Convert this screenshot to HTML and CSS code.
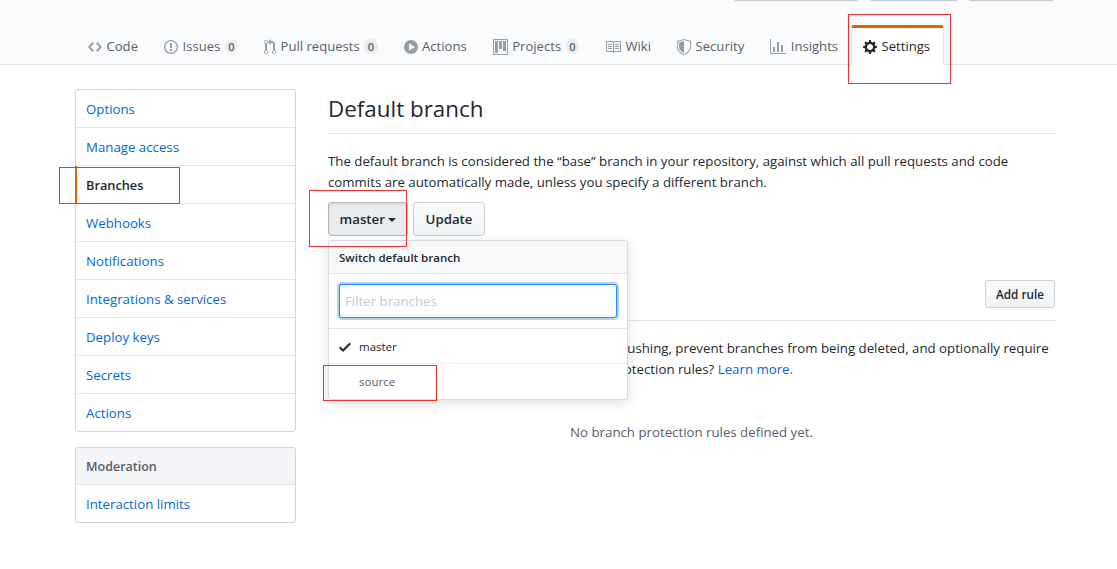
FILE: index.html
```html
<!DOCTYPE html>
<html lang="en">
<head>
  <meta charset="UTF-8" />
  <title>Branches</title>
  <link rel="stylesheet" href="styles.css">
</head>
<body>
  <header class="repo-head">
    <div class="stubs">
      <span class="stub stub-a"></span>
      <span class="stub stub-b"></span>
      <span class="stub stub-c"></span>
    </div>
    <nav class="tabs">
      <a class="tab">
        <svg class="icon" width="14" height="16" viewBox="0 0 14 16"><path fill="#959da5" d="M9.5 3L8 4.5 11.5 8 8 11.5 9.5 13 14 8 9.5 3zm-5 0L0 8l4.5 5L6 11.500 2.500 8 6 4.500 4.500 3z"/></svg>
        Code
      </a>
      <a class="tab">
        <svg class="icon" width="14" height="16" viewBox="0 0 14 16"><path fill="#959da5" fill-rule="evenodd" d="M7 2.300c3.140 0 5.700 2.560 5.700 5.700s-2.560 5.700-5.700 5.700A5.710 5.710 0 0 1 1.300 8c0-3.140 2.560-5.700 5.700-5.700zM7 1C3.140 1 0 4.140 0 8s3.140 7 7 7 7-3.140 7-7-3.140-7-7-7zm1 3H6v5h2V4zm0 6H6v2h2v-2z"/></svg>
        Issues <span class="count">0</span>
      </a>
      <a class="tab">
        <svg class="icon" width="12" height="16" viewBox="0 0 12 16"><path fill="#959da5" fill-rule="evenodd" d="M11 11.280V5c-.030-.780-.340-1.470-.940-2.060C9.460 2.350 8.780 2.030 8 2H7V0L4 3l3 3V4h1c.270.020.480.110.690.310.210.200.300.420.310.690v6.280A1.993 1.993 0 0 0 10 15a1.993 1.993 0 0 0 1-3.720zm-1 2.920c-.660 0-1.200-.550-1.200-1.200 0-.650.550-1.200 1.200-1.200.650 0 1.200.550 1.200 1.200 0 .650-.550 1.200-1.200 1.200zM4 3c0-1.110-.890-2-2-2a1.993 1.993 0 0 0-1 3.720v6.560A1.993 1.993 0 0 0 2 15a1.993 1.993 0 0 0 1-3.720V4.720c.590-.340 1-.980 1-1.720zm-.800 10c0 .660-.550 1.200-1.200 1.200-.650 0-1.200-.550-1.200-1.200 0-.650.550-1.200 1.200-1.200.650 0 1.200.550 1.200 1.200zM2 4.200C1.340 4.200.800 3.650.800 3c0-.650.550-1.200 1.200-1.200.650 0 1.200.550 1.200 1.200 0 .650-.550 1.200-1.200 1.200z"/></svg>
        Pull requests <span class="count">0</span>
      </a>
      <a class="tab">
        <svg class="icon" width="14" height="16" viewBox="0 0 14 16"><path fill="#959da5" fill-rule="evenodd" d="M7 1a7 7 0 1 0 0 14A7 7 0 0 0 7 1zM5 11.500v-7L11 8l-6 3.500z"/></svg>
        Actions
      </a>
      <a class="tab">
        <svg class="icon" width="15" height="16" viewBox="0 0 15 16"><path fill="#959da5" fill-rule="evenodd" d="M10 12h3V2h-3v10zm-4-2h3V2H6v8zm-4 4h3V2H2v12zm-1 1h13V1H1v14zM14 0H1a1 1 0 0 0-1 1v14a1 1 0 0 0 1 1h13a1 1 0 0 0 1-1V1a1 1 0 0 0-1-1z"/></svg>
        Projects <span class="count">0</span>
      </a>
      <a class="tab">
        <svg class="icon" width="16" height="16" viewBox="0 0 16 16"><path fill="#959da5" fill-rule="evenodd" d="M3 5h4v1H3V5zm0 3h4V7H3v1zm0 2h4V9H3v1zm11-5h-4v1h4V5zm0 2h-4v1h4V7zm0 2h-4v1h4V9zm2-6v9c0 .550-.450 1-1 1H9.500l-1 1-1-1H2c-.550 0-1-.450-1-1V3c0-.550.450-1 1-1h5.500l1 1 1-1H15c.550 0 1 .450 1 1zM8 3.500L7.500 3H2v9h6V3.500zM15 3H9.500L9 3.500V12h6V3z"/></svg>
        Wiki
      </a>
      <a class="tab">
        <svg class="icon" width="14" height="16" viewBox="0 0 14 16"><path fill="#959da5" fill-rule="evenodd" d="M0 2l7-2 7 2v6.020C14 12.690 8.690 16 7 16c-1.690 0-7-3.310-7-7.980V2zm7-1L1 2.750V8c0 4.100 4.800 6.800 6 7 1.200-.200 6-2.900 6-7V2.750L7 1z"/><path fill="#959da5" d="M2 3.500L7 2v12c-1-.300-5-2.800-5-6V3.500z"/></svg>
        Security
      </a>
      <a class="tab">
        <svg class="icon" width="16" height="16" viewBox="0 0 16 16"><path fill="#959da5" fill-rule="evenodd" d="M16 14v1H0V0h1v14h15zM5 13H3V8h2v5zm4 0H7V3h2v10zm4 0h-2V6h2v7z"/></svg>
        Insights
      </a>
      <a class="tab tab-selected">
        <svg class="icon" width="14" height="16" viewBox="0 0 14 16"><path fill="#24292e" fill-rule="evenodd" d="M14 8.770v-1.600l-1.940-.640-.450-1.090.880-1.840-1.130-1.130-1.810.910-1.090-.450-.690-1.920h-1.600l-.630 1.940-1.110.450-1.840-.880-1.130 1.130.910 1.810-.450 1.090L0 7.230v1.590l1.940.640.450 1.090-.880 1.840 1.130 1.130 1.810-.910 1.090.450.690 1.920h1.590l.630-1.940 1.110-.450 1.840.880 1.130-1.130-.920-1.810.470-1.090L14 8.750v.020zM7 11c-1.660 0-3-1.340-3-3s1.340-3 3-3 3 1.340 3 3-1.340 3-3 3z"/></svg>
        Settings
      </a>
    </nav>
  </header>

  <div class="page">
    <aside class="sidebar">
      <ul class="menu">
        <li><a>Options</a></li>
        <li><a>Manage access</a></li>
        <li class="selected"><a>Branches</a></li>
        <li><a>Webhooks</a></li>
        <li><a>Notifications</a></li>
        <li><a>Integrations &amp; services</a></li>
        <li><a>Deploy keys</a></li>
        <li><a>Secrets</a></li>
        <li><a>Actions</a></li>
      </ul>
      <ul class="menu">
        <li class="menu-head">Moderation</li>
        <li><a>Interaction limits</a></li>
      </ul>
    </aside>

    <main class="content">
      <h2 class="title">Default branch</h2>
      <p class="intro">The default branch is considered the “base” branch in your repository, against which all pull requests and code commits are automatically made, unless you specify a different branch.</p>

      <div class="branch-form">
        <button class="btn btn-open">master <span class="caret"></span></button>
        <button class="btn btn-update">Update</button>

        <div class="dropdown">
          <div class="dropdown-head">Switch default branch</div>
          <div class="dropdown-filter">
            <input class="filter" type="text" placeholder="Filter branches">
          </div>
          <div class="dropdown-item">
            <svg class="check" width="12" height="16" viewBox="0 0 12 16"><path fill="#24292e" fill-rule="evenodd" d="M12 5l-8 8-4-4 1.500-1.500L4 10l6.500-6.500L12 5z"/></svg>
            <span>master</span>
          </div>
          <div class="dropdown-item item-plain"><span>source</span></div>
        </div>
      </div>

      <div class="rules-head">
        <button class="btn btn-sm">Add rule</button>
      </div>
      <p class="rules-text">Define branch protection rules to disable force pushing, prevent branches from being deleted, and optionally require status checks before merging. New to branch protection rules? <a>Learn more.</a></p>
      <p class="blank">No branch protection rules defined yet.</p>
    </main>
  </div>

  <!-- red boxes drawn on top of the screenshot -->
  <span class="mark mark-settings"></span>
  <span class="mark mark-branches"></span>
  <span class="mark mark-master"></span>
  <span class="mark mark-source"></span>
</body>
</html>
```

FILE: styles.css
```css
* {
  box-sizing: border-box;
}

body {
  margin: 0;
  font-family: "Open Sans", "Noto Sans", sans-serif;
  font-size: 13.25px;
  line-height: 1.5;
  color: #24292e;
  background-color: #fff;
  position: relative;
  height: 569px;
  overflow: hidden;
}

a {
  color: #0366d6;
  text-decoration: none;
}

/* top bar */
.repo-head {
  height: 65px;
  background-color: #fafbfc;
  border-bottom: 1px solid #e1e4e8;
  padding-left: 75px;
}

.stubs {
  height: 1px;
  position: relative;
}

.stub {
  position: absolute;
  top: 0;
  height: 1px;
  background-color: #c4c8cc;
}

.stub-a { left: 660px; width: 122px; }
.stub-b { left: 796px; width: 86px; }
.stub-c { left: 894px; width: 84px; }

.tabs {
  display: flex;
  align-items: flex-end;
  height: 64px;
  margin-top: -1px;
}

.tab {
  display: flex;
  align-items: center;
  height: 40px;
  padding: 5px 13px 0;
  gap: 4.500px;
  font-size: 13.1px;
  color: #586069;
  white-space: nowrap;
}

.icon {
  flex: none;
}

.count {
  background-color: #eaecef;
  border-radius: 10px;
  color: #586069;
  font-size: 11px;
  font-weight: 600;
  line-height: 1;
  padding: 2px 3.500px;
}

.tab-selected {
  height: 40px;
  margin-bottom: -1px;
  padding: 0 13px 0 11px;
  background-color: #fff;
  color: #24292e;
  border: 1px solid #e1e4e8;
  border-top: 3px solid #e36209;
  border-bottom: 0;
  border-radius: 3px 3px 0 0;
}

/* page */
.page {
  display: flex;
  width: 980px;
  margin: 24px 0 0 75px;
}

.sidebar {
  width: 221px;
  flex: none;
  margin-right: 32px;
}

.menu {
  list-style: none;
  margin: 0 0 15px;
  padding: 0;
  background-color: #fff;
  border: 1px solid #d1d5da;
  border-radius: 3px;
}

.menu li {
  height: 38px;
  padding: 2px 10px 0;
  display: flex;
  align-items: center;
  border-bottom: 1px solid #e1e4e8;
}

.menu li:last-child {
  height: 37px;
  border-bottom: 0;
}

.menu .selected {
  border-left: 2px solid #e36209;
  margin-left: -1px;
  padding-left: 9px;
}

.menu .selected a {
  color: #24292e;
  font-size: 12.75px;
  font-weight: 600;
}

.menu .menu-head {
  height: 37px;
  background-color: #f3f5f8;
  color: #586069;
  font-size: 12.5px;
  font-weight: 600;
  border-radius: 3px 3px 0 0;
}

.content {
  flex: 1;
}

.title {
  margin: 0;
  height: 45px;
  font-size: 22.4px;
  font-weight: 400;
  line-height: 39px;
  border-bottom: 1px solid #e1e4e8;
}

.intro {
  margin: 17px 0 0;
  line-height: 21px;
}

.branch-form {
  position: relative;
  display: flex;
  gap: 5px;
  margin-top: 9px;
}

.btn {
  height: 34px;
  padding: 0 12px;
  font: 600 13.25px "Open Sans", "Noto Sans", sans-serif;
  color: #24292e;
  background: linear-gradient(#fafbfc, #eff3f6);
  border: 1px solid #cfd2d6;
  border-radius: 3px;
}

.btn-open {
  width: 80px;
  padding: 0;
  background: #e9ecef;
  border-color: #b5b9bd;
  box-shadow: inset 0 1px 3px rgba(27, 31, 35, 0.15);
}

.btn-update {
  width: 72px;
  padding: 0;
}

.caret {
  display: inline-block;
  vertical-align: middle;
  margin-left: 0;
  border: 4px solid transparent;
  border-top-color: #24292e;
  border-bottom: 0;
}

.dropdown {
  position: absolute;
  left: 0;
  top: 38px;
  width: 300px;
  z-index: 2;
  background-color: #fff;
  border: 1px solid #d8dade;
  border-radius: 3px;
  box-shadow: 0 3px 12px rgba(27, 31, 35, 0.15);
}

.dropdown-head {
  height: 33px;
  padding: 1px 10px 0;
  display: flex;
  align-items: center;
  font-size: 11.5px;
  font-weight: 600;
  background-color: #f6f8fa;
  border-bottom: 1px solid #e1e4e8;
}

.dropdown-filter {
  padding: 10px;
  height: 55px;
  border-bottom: 1px solid #e1e4e8;
}

.filter {
  display: block;
  width: 100%;
  height: 34px;
  padding: 0 5px;
  font: 13.25px "Open Sans", "Noto Sans", sans-serif;
  border: 1px solid #2188ff;
  border-radius: 3px;
  box-shadow: 0 0 0 2px rgba(3, 102, 214, 0.3);
  outline: none;
}

.filter::placeholder {
  color: #c6cacf;
}

.dropdown-item {
  display: flex;
  align-items: center;
  height: 35px;
  padding: 1px 0 0 10px;
  gap: 8px;
  font-size: 11.5px;
  border-bottom: 1px solid #eaecef;
}

.item-plain {
  padding: 0 0 0 30px;
  color: #586069;
  border-bottom: 0;
}

.rules-head {
  display: flex;
  justify-content: flex-end;
  height: 85px;
  padding-top: 44px;
  border-bottom: 1px solid #e1e4e8;
}

.btn-sm {
  width: 70px;
  height: 28px;
  padding: 0;
  font-size: 11.75px;
}

.rules-text {
  margin: 17px 0 0;
  line-height: 21px;
}

.blank {
  margin: 43px 0 0;
  text-align: center;
  color: #586069;
}

/* annotations */
.mark {
  position: absolute;
  z-index: 5;
  border: 1px solid #f03030;
}

.mark-settings { left: 848px; top: 14px; width: 103px; height: 70px; }
.mark-branches { left: 59px; top: 167px; width: 121px; height: 37px; }
.mark-master { left: 309px; top: 190px; width: 98px; height: 57px; }
.mark-source { left: 323px; top: 365px; width: 114px; height: 36px; }
```
